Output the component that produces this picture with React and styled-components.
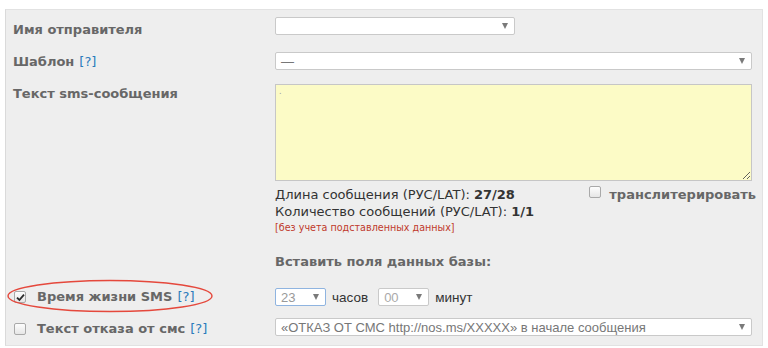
import { createGlobalStyle } from "styled-components";
import styled from "styled-components";

const GlobalStyle = createGlobalStyle`
  body {
    margin: 0;
    background: #ffffff;
    font-family: "DejaVu Sans", Verdana, sans-serif;
    font-size: 13px;
  }
`;

const Panel = styled.div`
  margin: 9px 5px 4px 5px;
  background: #eeeeee;
  border: 1px solid #e2e2e2;
  border-left-color: #dadada;
  padding: 7px 10px 8px 7px;
`;

const Row = styled.div`
  position: relative;
  display: grid;
  grid-template-columns: 262px 1fr;
  align-items: start;
  margin-top: ${(p) => p.$top || 0}px;
`;

const Label = styled.div`
  display: flex;
  align-items: center;
  padding-top: ${(p) => p.$pad || 0}px;
  font-weight: bold;
  line-height: 16px;
  color: #676767;
`;

const Help = styled.span`
  margin-left: 5px;
  font-weight: normal;
  color: #2b7bbb;
`;

const Select = styled.div`
  box-sizing: border-box;
  display: flex;
  align-items: center;
  justify-content: space-between;
  width: ${(p) => p.$width || "100%"};
  height: 18px;
  padding: 0 6px 0 5px;
  background: #fff;
  border: 1px solid ${(p) => (p.$focus ? "#8fb4e0" : "#c9c9c9")};
  border-radius: 2px;
  font-family: "Liberation Sans", Arial, sans-serif;
  font-size: 13px;
  color: ${(p) => p.$color || "#8a8a8a"};
  white-space: nowrap;
  overflow: hidden;
`;

const Arrow = styled.span`
  flex: none;
  width: 0;
  height: 0;
  border-left: 3px solid transparent;
  border-right: 3px solid transparent;
  border-top: 6px solid #7a7a7a;
  margin-left: 6px;
`;

const TextArea = styled.textarea`
  display: block;
  box-sizing: border-box;
  width: 100%;
  height: 97px;
  margin: 0;
  padding: 2px 3px;
  background: #fcfbc6;
  border: 1px solid #c6c6c6;
  font-family: "DejaVu Sans", sans-serif;
  font-size: 8px;
  color: #999;
  resize: both;
  outline: none;
`;

const Info = styled.div`
  display: flex;
  justify-content: space-between;
  align-items: flex-start;
  margin-top: 5px;
  margin-right: -4px;
`;

const Stats = styled.div`
  color: #333;
  line-height: 17px;
  b {
    font-weight: bold;
    color: #333;
  }
`;

const Note = styled.div`
  margin-top: 2px;
  font-size: 9.6px;
  line-height: 12px;
  color: #c0392b;
`;

const Translit = styled.label`
  display: flex;
  align-items: flex-start;
  gap: 8px;
  font-weight: bold;
  color: #676767;
  font-size: 13px;
  line-height: 18px;
`;

const Box = styled.span`
  box-sizing: border-box;
  flex: none;
  display: inline-flex;
  align-items: center;
  justify-content: center;
  width: 12px;
  height: 12px;
  margin-top: ${(p) => p.$mt || 0}px;
  border: 1px solid #a9a9a9;
  border-radius: 2px;
  background: linear-gradient(#fdfdfd, #e6e6e6);
`;

const Heading = styled.div`
  grid-column: 2;
  font-weight: bold;
  color: #676767;
  line-height: 16px;
`;

const Inline = styled.div`
  display: flex;
  align-items: center;
  gap: 6px;
`;

const Unit = styled.span`
  font-family: "Liberation Sans", Arial, sans-serif;
  font-size: 13.5px;
  color: #333;
  margin-right: 4px;
`;

const CheckLabel = styled(Label)`
  gap: 11px;
  padding-left: 1px;
`;

const Ellipse = styled.svg`
  position: absolute;
  left: -6px;
  top: -8px;
  pointer-events: none;
  overflow: visible;
`;

const Checkbox = ({ checked, mt }) => (
  <Box $mt={mt}>
    {checked && (
      <svg width="9" height="9" viewBox="0 0 9 9">
        <path d="M1 4.6 L3.4 7 L8 1.6" fill="none" stroke="#2b2b2b" strokeWidth="1.8" />
      </svg>
    )}
  </Box>
);

export default function App() {
  return (
    <>
      <GlobalStyle />
      <Panel>
        <Row>
          <Label $pad={5}>Имя отправителя</Label>
          <Select $width="240px">
            <span />
            <Arrow />
          </Select>
        </Row>

        <Row $top={14}>
          <Label $pad={2}>
            Шаблон<Help>[?]</Help>
          </Label>
          <Select $color="#777">
            <span>—</span>
            <Arrow />
          </Select>
        </Row>

        <Row $top={14}>
          <Label $pad={2}>Текст sms-сообщения</Label>
          <div>
            <TextArea readOnly value="." />
            <Info>
              <div>
                <Stats>
                  Длина сообщения (РУС/LAT): <b>27/28</b>
                  <br />
                  Количество сообщений (РУС/LAT): <b>1/1</b>
                </Stats>
                <Note>[без учета подставленных данных]</Note>
              </div>
              <Translit>
                <Checkbox mt={0} />
                транслитерировать
              </Translit>
            </Info>
          </div>
        </Row>

        <Row $top={20}>
          <Heading>Вставить поля данных базы:</Heading>
        </Row>

        <Row $top={18}>
          <Ellipse width="206" height="32">
            <ellipse cx="103" cy="16" rx="102" ry="15.5" fill="none" stroke="#e5483c" strokeWidth="1.4" />
          </Ellipse>
          <CheckLabel $pad={1}>
            <Checkbox checked />
            <span>
              Время жизни SMS<Help>[?]</Help>
            </span>
          </CheckLabel>
          <Inline>
            <Select $width="51px" $focus $color="#999">
              <span>23</span>
              <Arrow />
            </Select>
            <Unit>часов</Unit>
            <Select $width="51px" $color="#aaa">
              <span>00</span>
              <Arrow />
            </Select>
            <Unit>минут</Unit>
          </Inline>
        </Row>

        <Row $top={12}>
          <CheckLabel $pad={3}>
            <Checkbox />
            <span>
              Текст отказа от смс<Help>[?]</Help>
            </span>
          </CheckLabel>
          <Select $color="#777">
            <span>«ОТКАЗ ОТ СМС http://nos.ms/XXXXX» в начале сообщения</span>
            <Arrow />
          </Select>
        </Row>
      </Panel>
    </>
  );
}
